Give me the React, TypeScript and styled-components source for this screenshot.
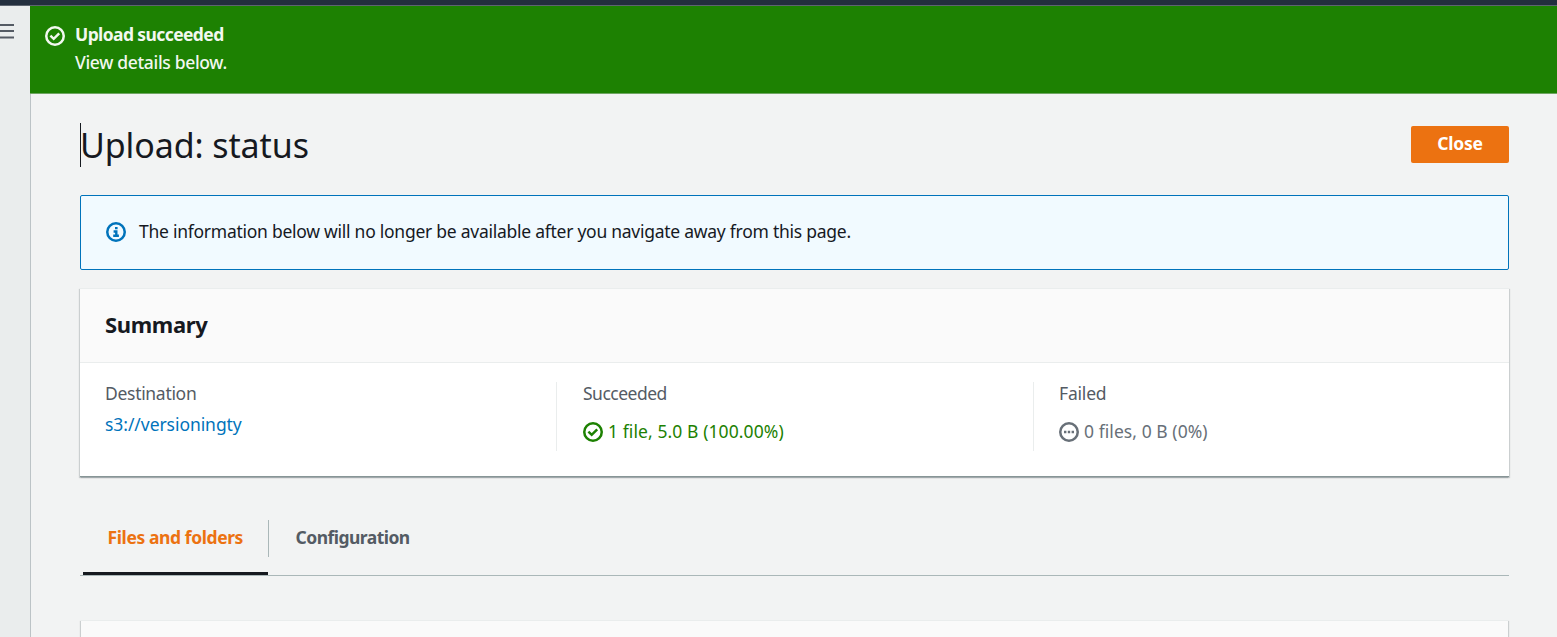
import React from 'react';
import styled, { createGlobalStyle } from 'styled-components';

const GlobalStyle = createGlobalStyle`
  * { box-sizing: border-box; }
  html, body { margin: 0; height: 637px; overflow: hidden; }
  body {
    font-family: "Noto Sans", "Open Sans", sans-serif;
    font-size: 17.5px;
    line-height: 28px;
    color: #16191f;
    background: #f2f3f3;
  }
`;

const Page = styled.div`
  height: 637px;
  display: flex;
  flex-direction: column;
  overflow: hidden;
`;

const TopBar = styled.div`
  height: 6px;
  flex: none;
  background: #232f3e;
  border-bottom: 1px solid #5d6570;
`;

const Body = styled.div`
  flex: 1;
  min-height: 0;
  display: flex;
`;

const SideRail = styled.div`
  width: 30px;
  flex: none;
  padding-top: 17px;
  background: #eaeded;
`;

const MenuIcon = styled.svg`
  display: block;
  width: 14px;
  height: 17px;
`;

const Main = styled.main`
  flex: 1;
  min-width: 0;
  display: flex;
  flex-direction: column;
`;

const Flash = styled.div`
  flex: none;
  height: 88px;
  display: flex;
  gap: 10px;
  padding: 15px;
  color: #f2f8f0;
  background: #1d8102;
  border-bottom: 1px solid #6fa562;
  svg { margin-top: 5px; }
`;

const FlashText = styled.div`
  display: flex;
  flex-direction: column;
`;

const Text = styled.span<{ $spacing?: number; $weight?: number }>`
  display: block;
  padding-bottom: 2px;
  line-height: 26px;
  white-space: nowrap;
  letter-spacing: ${(p) => p.$spacing ?? 0}px;
  font-weight: ${(p) => p.$weight ?? 400};
`;

const Content = styled.div`
  flex: 1;
  min-height: 0;
  padding: 29px 48px 0 49px;
  border-left: 1px solid #bcc3c6;
`;

const TitleRow = styled.div`
  height: 44px;
  display: flex;
  align-items: flex-start;
  justify-content: space-between;
`;

const Title = styled.h1`
  margin: 0;
  height: 44px;
  border-left: 1px solid #16191f;
  text-indent: -1px;
  font-size: 34px;
  line-height: 44px;
  font-weight: 400;
  letter-spacing: -0.1px;
  white-space: nowrap;
`;

const CloseButton = styled.button`
  width: 98px;
  height: 37px;
  margin-top: 3px;
  padding: 0 0 3px;
  border: 0;
  border-radius: 2px;
  background: #ec7211;
  color: #fff;
  font: 700 17.5px/28px "Noto Sans", sans-serif;
  letter-spacing: -0.25px;
`;

const InfoBox = styled.div`
  height: 75px;
  margin-top: 28px;
  padding: 0 25px 1px;
  display: flex;
  align-items: center;
  gap: 13px;
  border: 1px solid #0073bb;
  border-radius: 2px;
  background: #f1faff;
`;

const Card = styled.section`
  background: #fff;
  border-top: 1px solid #eaeded;
  box-shadow: 0 1px 1px 0 rgba(0, 28, 36, 0.08), 1px 1px 1px 0 rgba(0, 28, 36, 0.15),
    -1px 1px 1px 0 rgba(0, 28, 36, 0.15);
`;

const SummaryCard = styled(Card)`
  height: 189px;
  margin-top: 18px;
  border-bottom: 1px solid #879596;
`;

const CardHeader = styled.header`
  height: 74px;
  padding: 0 25px 3px;
  display: flex;
  align-items: center;
  background: #fafafa;
  border-bottom: 1px solid #eaeded;
`;

const CardTitle = styled.h2`
  margin: 0;
  font-size: 22px;
  line-height: 28px;
  font-weight: 700;
  letter-spacing: -0.35px;
`;

const Columns = styled.div`
  display: grid;
  grid-template-columns: 476px 477px 1fr;
  padding-top: 19px;
`;

const Column = styled.div<{ $divided?: boolean; $inset?: number }>`
  height: 69px;
  padding-left: ${(p) => p.$inset ?? 25}px;
  border-left: ${(p) => (p.$divided ? '1px solid #eaeded' : '0')};
`;

const Label = styled.div`
  height: 24px;
  display: flex;
  align-items: center;
  color: #545b64;
`;

const Value = styled.div<{ $color: string; $top: number }>`
  margin-top: ${(p) => p.$top}px;
  height: 28px;
  display: flex;
  align-items: center;
  gap: 5px;
  color: ${(p) => p.$color};
`;

const Tabs = styled.div`
  height: 56px;
  margin-top: 43px;
  padding-left: 3px;
  display: flex;
  border-bottom: 1px solid #aab7b8;
`;

const Tab = styled.div<{ $active?: boolean }>`
  height: 55px;
  width: ${(p) => (p.$active ? '185px' : 'auto')};
  padding: 4px 0 0 ${(p) => (p.$active ? 24.6 : 26.6)}px;
  color: ${(p) => (p.$active ? '#ec7211' : '#545b64')};
  border-bottom: 3px solid ${(p) => (p.$active ? '#16191f' : 'transparent')};
`;

const TabDivider = styled.div`
  width: 1px;
  height: 37px;
  background: #aab7b8;
`;

const FilesCard = styled(Card)`
  height: 60px;
  margin: 44px 1px 0;
  background: #fafafa;
`;

const Icon = styled.svg`
  display: block;
  flex: none;
  width: 20px;
  height: 20px;
  fill: none;
  stroke: currentColor;
  stroke-width: 2.5;
`;

const InfoIcon = styled(Icon)`
  color: #0073bb;
`;

const CheckGlyph = () => (
  <Icon viewBox="0 0 20 20">
    <circle cx="10" cy="10" r="8.75" />
    <path d="M5.4 9.6l3.3 3.2 5.5-5.5" />
  </Icon>
);

const PendingGlyph = () => (
  <Icon viewBox="0 0 20 20">
    <circle cx="10" cy="10" r="8.75" />
    <path d="M5 10h2.4M8.8 10h2.4M12.6 10H15" />
  </Icon>
);

const InfoGlyph = () => (
  <InfoIcon viewBox="0 0 20 20">
    <circle cx="10" cy="10" r="8.75" />
    <path d="M9 6.1h2.6M7.6 9.5h3.9M10.3 9v5M7.2 13.8h5.7" strokeWidth="2.4" />
  </InfoIcon>
);

export default function App() {
  return (
    <>
      <GlobalStyle />
      <Page>
        <TopBar />
        <Body>
          <SideRail>
            <MenuIcon viewBox="0 0 14 17">
              <path d="M0 2h14M0 8h14M0 14.5h14" stroke="#545b64" strokeWidth="2.2" />
            </MenuIcon>
          </SideRail>
          <Main>
            <Flash>
              <CheckGlyph />
              <FlashText>
                <Text $weight={700} $spacing={-0.6}>Upload succeeded</Text>
                <Text $weight={500} $spacing={-0.33}>View details below.</Text>
              </FlashText>
            </Flash>
            <Content>
              <TitleRow>
                <Title>Upload: status</Title>
                <CloseButton>Close</CloseButton>
              </TitleRow>
              <InfoBox>
                <InfoGlyph />
                <Text $spacing={-0.26}>The information below will no longer be available after you navigate away from this page.</Text>
              </InfoBox>
              <SummaryCard>
                <CardHeader>
                  <CardTitle>Summary</CardTitle>
                </CardHeader>
                <Columns>
                  <Column>
                    <Label><Text $spacing={-0.3}>Destination</Text></Label>
                    <Value $color="#0073bb" $top={5}><Text $spacing={-0.06}>s3://versioningty</Text></Value>
                  </Column>
                  <Column $divided $inset={26}>
                    <Label><Text $spacing={-0.5}>Succeeded</Text></Label>
                    <Value $color="#1d8102" $top={12}>
                      <CheckGlyph />
                      <Text $spacing={0.09}>1 file, 5.0 B (100.00%)</Text>
                    </Value>
                  </Column>
                  <Column $divided>
                    <Label><Text $spacing={-0.2}>Failed</Text></Label>
                    <Value $color="#687078" $top={12}>
                      <PendingGlyph />
                      <Text $spacing={0.06}>0 files, 0 B (0%)</Text>
                    </Value>
                  </Column>
                </Columns>
              </SummaryCard>
              <Tabs>
                <Tab $active><Text $weight={700} $spacing={-0.41}>Files and folders</Text></Tab>
                <TabDivider />
                <Tab><Text $weight={700} $spacing={-0.54}>Configuration</Text></Tab>
              </Tabs>
              <FilesCard />
            </Content>
          </Main>
        </Body>
      </Page>
    </>
  );
}
